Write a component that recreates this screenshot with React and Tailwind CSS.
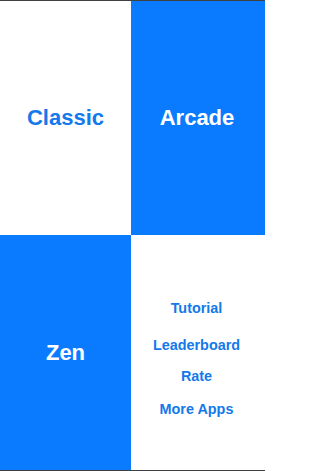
const font = { fontFamily: '"Liberation Sans", Arial, sans-serif' }

function Tile({ blue, children, className = '' }) {
  return (
    <div
      className={
        blue
          ? `flex bg-[#0a7bff] text-white ${className}`
          : `flex bg-white text-[#1479ea] ${className}`
      }
    >
      {children}
    </div>
  )
}

export default function App() {
  return (
    <div className="flex h-[471px] w-[265px] flex-col overflow-hidden bg-white" style={font}>
      <div className="h-px bg-black/75" />
      <div className="grid flex-1 grid-cols-[131px_1fr] grid-rows-[234px_1fr]">
        <Tile className="items-center justify-center">
          <span className="text-[22px] font-bold leading-none">Classic</span>
        </Tile>
        <Tile blue className="items-center justify-center pr-0.5">
          <span className="text-[22px] font-bold leading-none">Arcade</span>
        </Tile>
        <Tile blue className="items-center justify-center">
          <span className="text-[22px] font-bold leading-none">Zen</span>
        </Tile>
        <Tile className="flex-col items-center pr-[3px] pt-[65px] text-[14.4px] font-bold leading-[16px]">
          <span>Tutorial</span>
          <span className="mt-[21px]">Leaderboard</span>
          <span className="mt-[15px]">Rate</span>
          <span className="mt-[17px]">More Apps</span>
        </Tile>
      </div>
      <div className="h-px bg-black/75" />
    </div>
  )
}
